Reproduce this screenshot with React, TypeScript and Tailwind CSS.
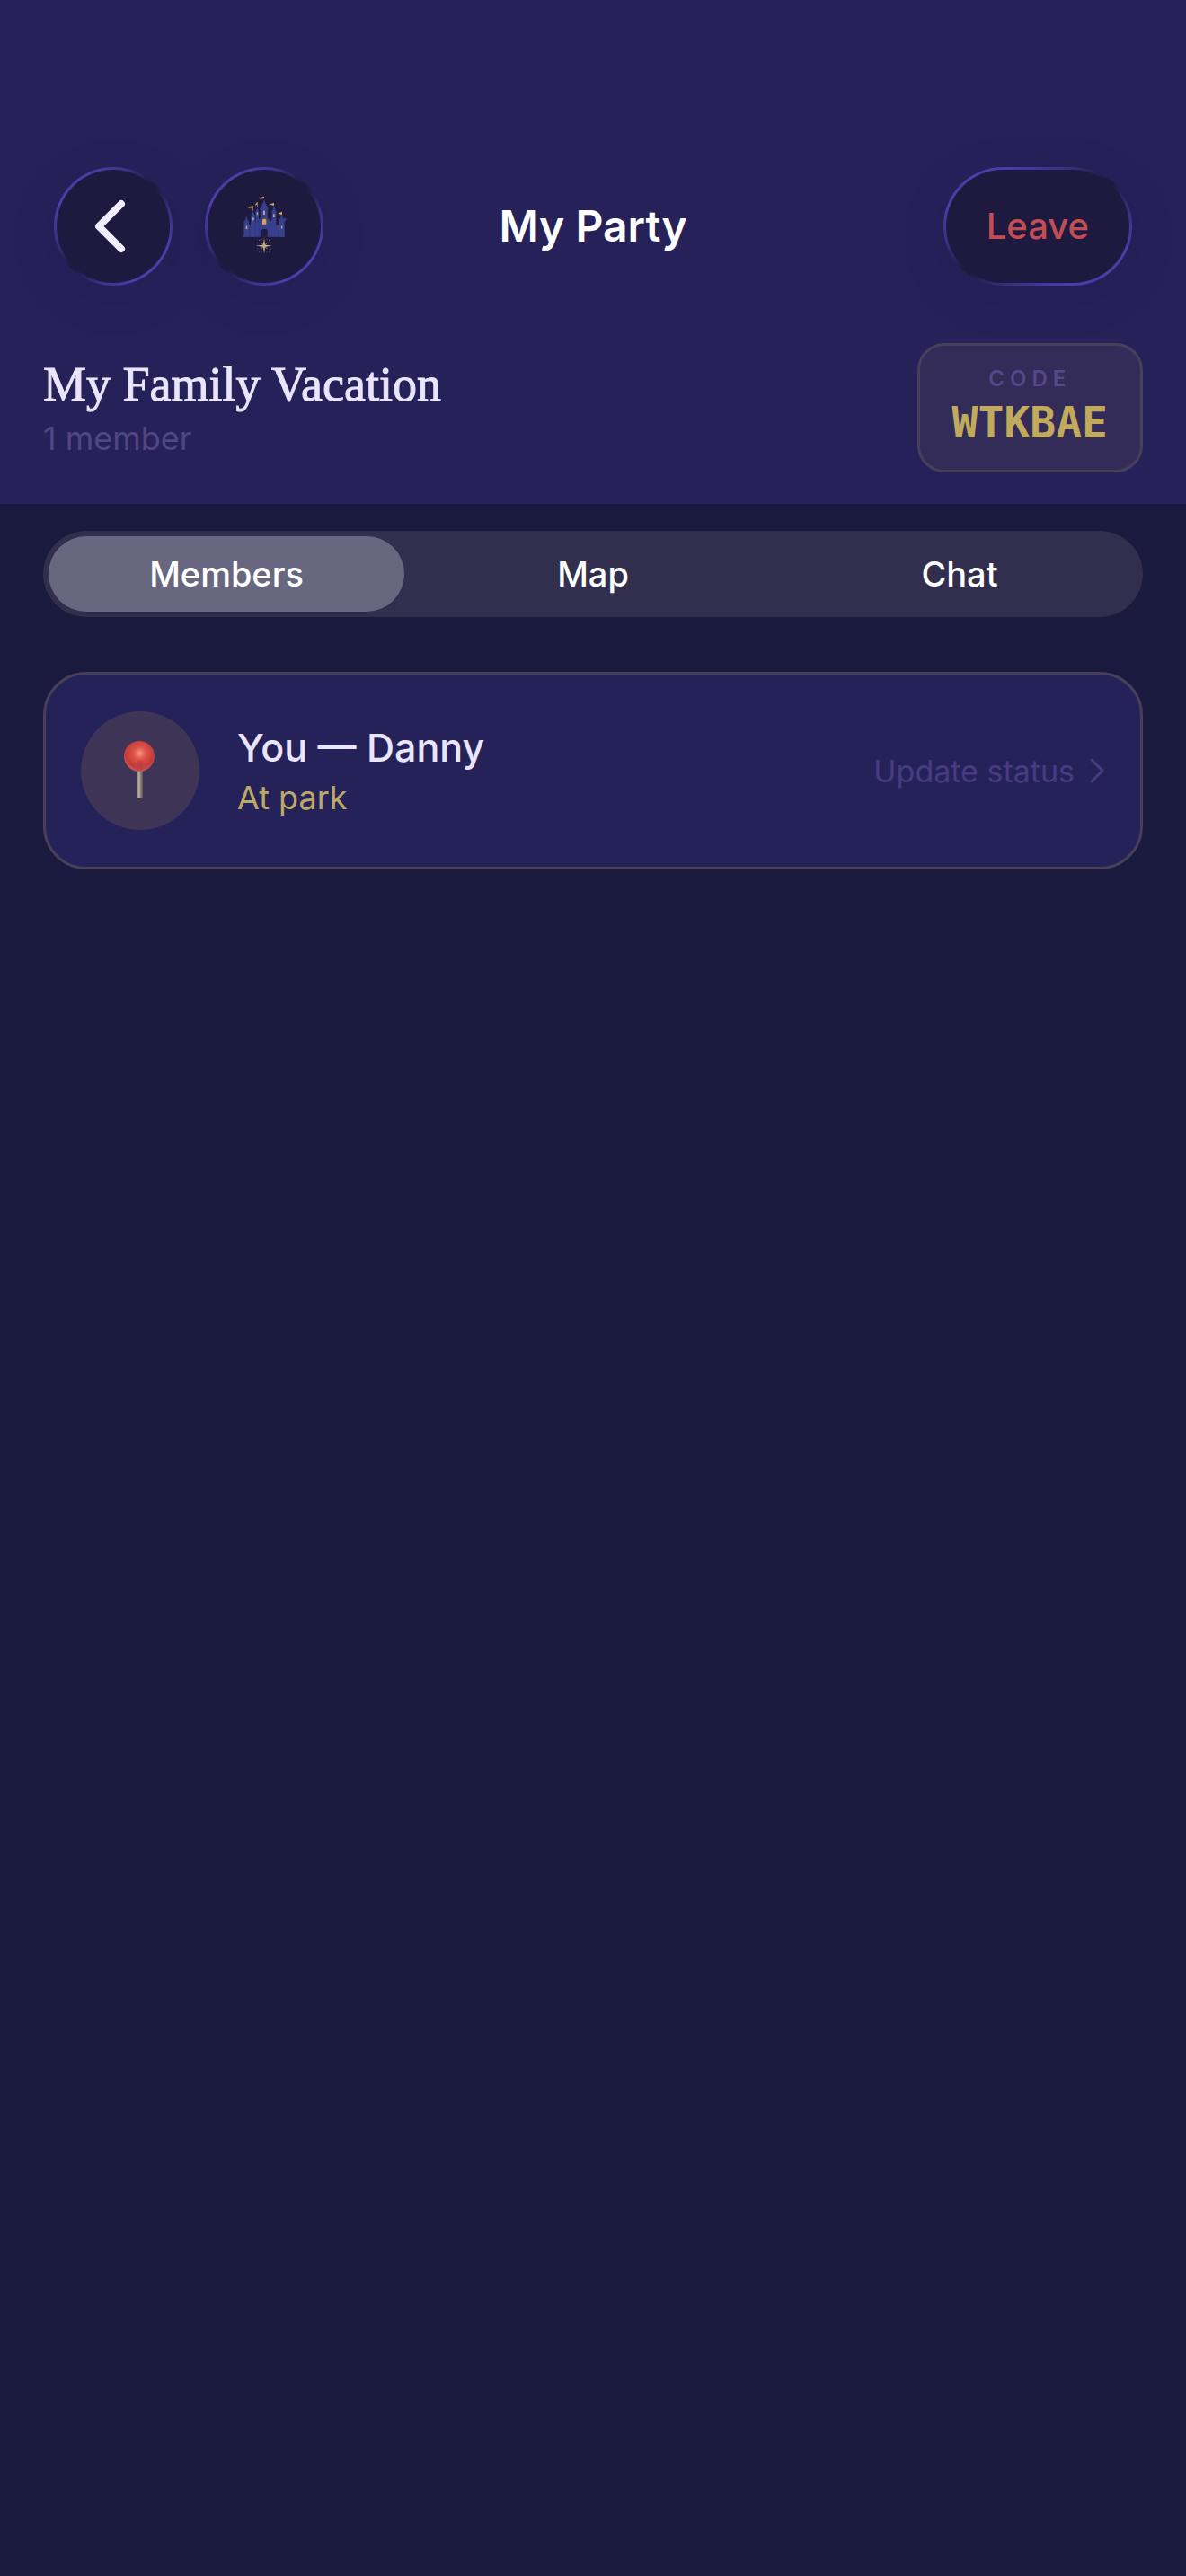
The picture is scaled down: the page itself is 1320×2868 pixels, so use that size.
import { useState } from 'react';

const tabs = ['Members', 'Map', 'Chat'];

const members = [{ id: 1, name: 'You — Danny', status: 'At park' }];

const glassButton =
    'flex h-33 items-center justify-center rounded-full border-3 border-transparent shadow-[0_12px_48px_8px_rgba(20,16,80,0.08)] [background:linear-gradient(#1e1a3f,#1e1a3f)_padding-box,linear-gradient(to_bottom_right,#4a3da6_18%,#3a3186_32%,#1e1a3f_48%,#1e1a3f_52%,#3a3186_68%,#4a3da6_82%)_border-box]';

function BackIcon() {
    return (
        <svg width="40" height="64" viewBox="0 0 40 64" fill="none" stroke="#f1edff" strokeWidth="8" strokeLinecap="round" strokeLinejoin="round">
            <path d="M29 7 L4 32 L29 57" />
        </svg>
    );
}

function CastleIcon() {
    return (
        <svg width="60" height="72" viewBox="72 52 180 216">
            {/* Towers and walls */}
            <g fill="#38408c">
                <path d="M162 70 L166 83 L172 94 L177 104 L173 104 V133 H151 V104 L147 104 L152 94 L158 83 Z" />
                <path d="M139 96 L142 107 L146 115 H144 V142 H134 V115 H132 L136 107 Z" />
                <path d="M125 108 L129 119 L134 127 H132 V195 H118 V127 H116 L121 119 Z" />
                <path d="M103 126 L107 139 L113 148 H111 V195 H95 V148 H93 L99 139 Z" />
                <path d="M195 90 L199 103 L204 115 H202 V195 H188 V115 H186 L191 103 Z" />
                <path d="M209 132 H213 V135 H217 V129 L221 122 L225 129 V135 H229 V132 H235 V137 L230 145 V195 H213 V145 L209 139 Z" />
                <path d="M91 190 H95 V153 H114 V158 H118 V150 H124 V153 H129 V148 H134 V140 H140 V144 H144 V136 H149 V130 H175 V136 H180 V144 H185 V140 H190 V150 H200 V156 H212 V158 H229 V190 H231 V195 H91 Z" />
            </g>
            <path d="M153 195 V175 Q153 168 163 168 Q173 168 173 175 V195 Z" fill="#1e1a3f" />
            <g stroke="#2d3078" strokeWidth="2">
                <path d="M114 160 V195 M132 152 V195 M146 160 V195 M180 160 V195 M211 158 V195" />
            </g>
            {/* Windows */}
            <g fill="#b9a78c">
                <rect x="159" y="108" width="6" height="13" />
                <rect x="137" y="113" width="4" height="9" />
                <rect x="123" y="131" width="5" height="9" />
                <rect x="101" y="159" width="5" height="10" />
                <rect x="192" y="119" width="5" height="11" />
                <rect x="219" y="158" width="4" height="10" />
            </g>
            <path d="M156 153 V139 L159 135 H166 L169 139 V153 Z" fill="#d2a74c" />
            {/* Pennants */}
            <g fill="#d0a854">
                <path d="M162 60 V64 L155 70 V66 L146 69 L150 65 L156 62 Z" />
                <path d="M140 78 V95 H138 V87 L131 90 L134 84 Z" />
                <path d="M125 91 V108 H123 V98 L118 101 V97 L108 101 L113 95 Z" />
                <path d="M195 81 V92 H193 V89 L188 91 V88 L177 89 L183 86 Z" />
                <path d="M222 111 V122 H220 V119 L215 123 V118 L207 119 L212 115 Z" />
            </g>
            {/* Star */}
            <path d="M162 199 L165 222 L188 225 L165 228 L162 251 L159 228 L134 225 L159 222 Z" fill="#dcc39b" />
            <path d="M152 215 L172 235 M172 215 L152 235" stroke="#b99863" strokeWidth="3" />
            <path d="M144 206 h3 M177 206 h3 M144 244 h3 M177 244 h3 M152 203 h2 M170 203 h2 M152 247 h2 M170 247 h2 M139 216 h2 M184 216 h2 M139 235 h2 M184 235 h2" stroke="#9e845e" strokeWidth="3" />
        </svg>
    );
}

function PinIcon() {
    return (
        <svg width="48" height="68" viewBox="0 0 48 68">
            <defs>
                <radialGradient id="pin-ball" cx="0.52" cy="0.4" r="0.6">
                    <stop offset="0" stopColor="#fa9482" />
                    <stop offset="0.35" stopColor="#de5249" />
                    <stop offset="0.75" stopColor="#c43a38" />
                    <stop offset="1" stopColor="#c5585c" />
                </radialGradient>
                <linearGradient id="pin-stem" x1="0" x2="1" y1="0" y2="0">
                    <stop offset="0" stopColor="#6d6768" />
                    <stop offset="0.4" stopColor="#bdb3ab" />
                    <stop offset="0.65" stopColor="#8b8179" />
                    <stop offset="1" stopColor="#5a4d52" />
                </linearGradient>
            </defs>
            <path d="M20 32 H27 V64 Q23 66 20 64 Z" fill="url(#pin-stem)" />
            <circle cx="23" cy="18" r="17" fill="url(#pin-ball)" />
            <path d="M20 24 Q23 21 27 24 V33 H20 Z" fill="#b8404a" opacity="0.6" />
        </svg>
    );
}

function ChevronIcon() {
    return (
        <svg width="18" height="30" viewBox="0 0 18 30" fill="none" stroke="#473b82" strokeWidth="3" strokeLinecap="round" strokeLinejoin="round">
            <path d="M3 3 L15 15 L3 27" />
        </svg>
    );
}

export default function App() {
    const [activeTab, setActiveTab] = useState('Members');

    return (
        <div className="min-h-screen bg-[#1a1a3e] font-['Inter',sans-serif] text-white">
            <header className="bg-[#262159] pt-[186px] pb-[35px]">
                {/* Navigation bar */}
                <nav className="grid grid-cols-[1fr_auto_1fr] items-center px-15">
                    <div className="flex gap-9">
                        <button type="button" aria-label="Back" className={`${glassButton} w-33`}>
                            <BackIcon />
                        </button>
                        <button type="button" aria-label="Home" className={`${glassButton} w-33`}>
                            <CastleIcon />
                        </button>
                    </div>
                    <h1 className="text-[48px] leading-[60px] font-semibold">My Party</h1>
                    <button type="button" className={`${glassButton} justify-self-end px-[45px] text-[40px] font-medium text-[#c24d55]`}>
                        Leave
                    </button>
                </nav>

                {/* Party info */}
                <div className="mt-16 flex items-center justify-between px-12">
                    <div>
                        <h2 className="font-['Liberation_Serif',serif] text-[54px] leading-[64px] font-medium text-[#ebe5fb] [-webkit-text-stroke:1px_#ebe5fb]">My Family Vacation</h2>
                        <p className="mt-1 text-[36px] leading-[48px] text-[#514583]">1 member</p>
                    </div>
                    <div className="flex flex-col items-center rounded-[30px] border-3 border-[#483f5a] bg-[#332c58] px-9 py-[21px]">
                        <span className="text-[24px] leading-[32px] font-semibold tracking-[6px] text-[#54478a]">CODE</span>
                        <span className="font-['DejaVu_Sans_Mono',monospace] text-[48px] leading-[64px] font-bold text-[#c2aa5c]">WTKBAE</span>
                    </div>
                </div>
            </header>

            <main className="px-12 pt-[30px]">
                {/* Tabs */}
                <div role="tablist" className="grid h-24 grid-cols-3 gap-3 rounded-full bg-[#312f4d] p-[6px]">
                    {tabs.map((tab) => (
                        <button
                            key={tab}
                            type="button"
                            role="tab"
                            aria-selected={activeTab === tab}
                            onClick={() => setActiveTab(tab)}
                            className={`rounded-full text-[38px] font-medium ${activeTab === tab ? 'bg-[#69677f]' : ''}`}
                        >
                            {tab}
                        </button>
                    ))}
                </div>

                {/* Member list */}
                <ul className="mt-[61px] flex flex-col gap-6">
                    {members.map((member) => (
                        <li key={member.id} className="flex items-center rounded-[48px] border-3 border-[#483f58] bg-[#252259] px-[39px] py-[41px]">
                            <div className="flex size-33 shrink-0 items-center justify-center rounded-full bg-[#3e3556]">
                                <PinIcon />
                            </div>
                            <div className="ml-[42px] flex-1">
                                <p className="text-[43px] leading-[56px] font-medium text-[#ebe5fb]">{member.name}</p>
                                <p className="mt-1 text-[36px] leading-[48px] text-[#bda868]">{member.status}</p>
                            </div>
                            <button type="button" className="flex items-center gap-4 text-[34px] text-[#473b82]">
                                Update status
                                <ChevronIcon />
                            </button>
                        </li>
                    ))}
                </ul>
            </main>
        </div>
    );
}
